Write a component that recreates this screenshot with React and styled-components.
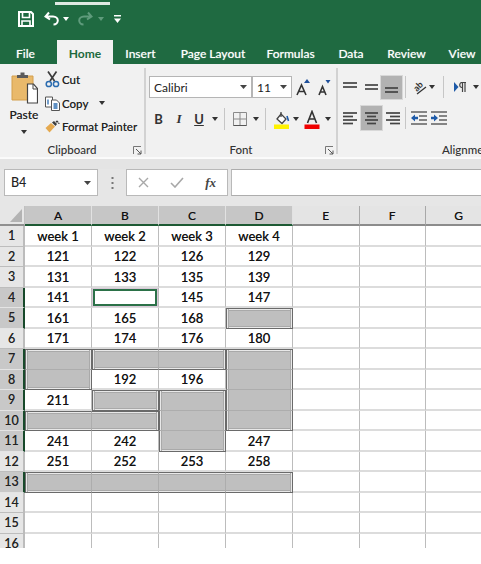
import React from "react";
import styled, { createGlobalStyle } from "styled-components";

const Global = createGlobalStyle`
  html, body { margin: 0; padding: 0; background: #fff; }
  #root { width: 481px; height: 564px; overflow: hidden; }
  * { box-sizing: border-box; }
`;

const FONT = `Lato, "Open Sans", "Liberation Sans", sans-serif`;
const GREEN = "#1f6a41";

const Page = styled.div`
  width: 481px; height: 548px; overflow: hidden; display: flex; flex-direction: column;
  font-family: ${FONT}; color: #222; background: #e6e6e6;
`;
const TitleBar = styled.div`
  height: 40px; background: ${GREEN}; position: relative; display: flex; align-items: center; padding: 0 0 2px 17px;
`;
const TitleHighlight = styled.div`
  position: absolute; left: 55px; top: 2px; width: 55px; height: 3px; background: #dfe9e2;
`;
const QatSlot = styled.div`
  width: ${p => p.$w}px; height: 24px; display: flex; align-items: center; justify-content: center; flex: none;
`;
const TabBar = styled.div`
  height: 24px; background: ${GREEN}; display: flex; align-items: stretch; overflow: hidden;
`;
const Tab = styled.div`
  width: ${p => p.$w}px; flex: none; display: flex; align-items: center; justify-content: center;
  font-size: 12px; font-weight: ${p => p.$active ? 700 : 500}; padding: 2px ${p => p.$pr || 0}px 0 0;
  color: ${p => p.$active ? "#1d6a3e" : "#fff"};
  background: ${p => p.$active ? "#f1f1f1" : "transparent"};
  text-shadow: ${p => p.$active ? "none" : "0 0 1px rgba(255,255,255,.5)"};
  white-space: nowrap;
`;
const Ribbon = styled.div`
  height: 94px; background: #f1f1f1; display: flex; border-bottom: 1px solid #fafafa; overflow: hidden;
`;
const Group = styled.div`
  width: ${p => p.$w}px; flex: none; position: relative; padding-top: ${p => p.$top || 0}px;
  margin: 4px 0 3px; border-right: ${p => p.$last ? "none" : "2px solid #d2d2d2"};
`;
const GroupLabel = styled.div`
  position: absolute; left: ${p => p.$left ?? 0}px; ${p => p.$left === undefined ? "right: 0;" : ""} bottom: -4px; height: 17px; line-height: 17px; text-align: center;
  font-size: 11.5px; font-weight: 500; color: #333; white-space: nowrap;
`;
const Launcher = styled.div`
  position: absolute; right: 2px; bottom: -1px; width: 9px; height: 9px; display: flex;
`;
const ClipLayout = styled.div`
  display: flex; padding-left: 10px;
`;
const PasteCol = styled.div`
  width: 28px; display: flex; flex-direction: column; align-items: center; font-size: 12px; font-weight: 500; line-height: 15px; padding-top: 4px;
`;
const PasteLabel = styled.div`
  margin-top: 3px; color: #222; text-shadow: 0 0 .5px rgba(0,0,0,.4);
`;
const PasteCaret = styled.div`
  margin-top: 8px;
`;
const ClipList = styled.div`
  margin-left: 7px; display: flex; flex-direction: column; padding-top: 0;
`;
const ClipItem = styled.div`
  height: 23.5px; display: flex; align-items: center; font-size: 11.5px; font-weight: 500; color: #222; white-space: nowrap;
  text-shadow: 0 0 .5px rgba(0,0,0,.4);
`;
const ClipIcon = styled.div`
  width: 17px; display: flex; flex: none;
`;
const CaretGap = styled.span`
  width: 11px;
`;
const ToolRow = styled.div`
  display: flex; align-items: center; height: ${p => p.$h || 24}px; margin-top: ${p => p.$mt || 0}px; padding-left: ${p => p.$pl || 0}px;
`;
const Combo = styled.div`
  width: ${p => p.$w}px; height: 22px; background: #fff; border: 1px solid #b5b5b5; flex: none;
  display: flex; align-items: center; justify-content: space-between; padding: 0 4px; font-size: 12px; color: #222;
`;
const Tool = styled.div`
  width: ${p => p.$w}px; height: ${p => p.$h || 22}px; flex: none; display: flex; align-items: center; justify-content: center;
  font-size: 13px; font-weight: 700; color: #333;
  background: ${p => p.$on ? "#b2b2b2" : "transparent"};
  outline: ${p => p.$on ? "1px solid #d8d8d8" : "none"};
  font-style: ${p => p.$italic ? "italic" : "normal"};
  font-family: ${p => p.$italic ? `"Liberation Serif", serif` : "inherit"};
  text-decoration: ${p => p.$under ? "underline" : "none"};
`;
const Sep = styled.div`
  width: 1px; height: 22px; background: #c6c6c6; flex: none; margin: 0 ${p => p.$m || 4}px;
`;
const Gap = styled.div`
  height: 11px; flex: none; background: #e4e4e4; border-top: 1px solid #fbfbfb;
`;
const FormulaBar = styled.div`
  height: 27px; background: #e6e6e6; display: flex; align-items: stretch; flex: none;
`;
const NameBox = styled.div`
  width: 94px; margin-left: 4px; background: #fff; border: 1px solid #b9b9b9; display: flex; align-items: center; justify-content: space-between;
  padding: 0 6px 0 6px; font-size: 12.5px; font-weight: 500; color: #222;
`;
const Dots = styled.div`
  width: 28px; display: flex; align-items: center; justify-content: center;
`;
const FxBox = styled.div`
  width: 102px; background: #fff; border: 1px solid #b9b9b9; display: flex; align-items: center; justify-content: space-between; padding: 0 11px 0 11px;
`;
const FxText = styled.span`
  font-family: "Liberation Serif", serif; font-style: italic; font-weight: 700; font-size: 13px; color: #444;
`;
const FormulaInput = styled.div`
  flex: 1; margin-left: 3px; background: #fff; border-top: 1px solid #adadad; border-bottom: 1px solid #adadad; border-left: 1px solid #b9b9b9;
`;
const SheetGap = styled.div`
  height: 10px; background: #e6e6e6; flex: none;
`;
const Sheet = styled.div`
  flex: 1; min-height: 0; overflow: hidden; background: #fff; display: grid;
  grid-template-columns: 25px 67px 67px 67px 67px 66.5px 66.5px 66.5px;
  grid-template-rows: 20px;
  grid-auto-rows: 20.5px;
  width: 500px;
`;
const Corner = styled.div`
  background: #e6e6e6; border-bottom: 2px solid #909090; border-right: 1px solid #c0c0c0; display: flex; align-items: flex-end; justify-content: flex-end; padding: 0 2px 2px 0;
`;
const ColHead = styled.div`
  display: flex; align-items: center; justify-content: center; font-size: 12px; font-weight: 500; color: #111;
  background: ${p => p.$sel ? "#c6c6c6" : "#e4e4e4"};
  border-right: 1px solid ${p => p.$sel ? "#e2e2e2" : "#a8a8a8"};
  border-bottom: 2px solid ${p => p.$sel ? "#1d5a34" : "#8c8c8c"};
  text-shadow: 0 0 .5px rgba(0,0,0,.4);
`;
const RowHead = styled.div`
  display: flex; align-items: center; justify-content: center; font-size: 12.5px; font-weight: 500; color: #222;
  background: ${p => p.$sel ? "#c8c8c8" : "#e6e6e6"};
  border-bottom: 1px solid ${p => p.$sel ? "#e4e4e4" : "#bdbdbd"};
  border-right: 2px solid ${p => p.$sel ? "#17492a" : "#bcbcbc"};
  text-shadow: 0 0 .5px rgba(0,0,0,.4);
`;
const Cell = styled.div`
  display: flex; align-items: center; justify-content: center; font-size: 13px; font-weight: 500; color: #111;
  border-right: 1px solid #bcbcbc; border-bottom: 2px solid #dcdcdc; background: #fff; position: relative; padding-top: 1px;
  text-shadow: 0 0 .5px rgba(0,0,0,.5);
`;
const edge = v => (v ? "1px solid #6a6a6a" : "1px solid #adadad");
const insetSide = (x, y, on) => {
  if (!on) return [];
  return [`inset ${x}px ${y}px 0 #e9e9e9`, `inset ${x * 2}px ${y * 2}px 0 #a9a9a9`];
};
const ShadeCell = styled.div`
  background: #bfbfbf;
  border-top: ${p => p.$t ? edge(true) : "0 solid transparent"};
  border-left: ${p => p.$l ? edge(true) : "0 solid transparent"};
  border-right: ${p => edge(p.$r)}; border-bottom: ${p => edge(p.$b)};
  box-shadow: ${p => {
    const s = [...insetSide(1, 0, p.$l), ...insetSide(-1, 0, p.$r), ...insetSide(0, 1, p.$t), ...insetSide(0, -1, p.$b)];
    return s.length ? s.join(", ") : "none";
  }};
`;
const Selected = styled.div`
  position: absolute; inset: 1px 1px 0 1px; border: 2px solid #2b7148; background: #fff; box-shadow: 0 0 0 1px #d8c9d8;
`;
const Svg = ({ w, h, vb, children }) => <svg width={w} height={h} viewBox={vb || `0 0 ${w} ${h}`} style={{ display: "block", flex: "none" }}>{children}</svg>;

const Caret = ({ c = "#333", w = 7 }) => <Svg w={w} h={4}><path d={`M0 0H${w}L${w / 2} 4Z`} fill={c} /></Svg>;
const SaveIcon = () => <Svg w={16} h={16}><path d="M1 1h12l2 2v12H1z" fill="none" stroke="#fff" strokeWidth="2" /><path d="M4.5 2v4.5h7V2M4 15v-5h8v5" fill="none" stroke="#fff" strokeWidth="1.6" /></Svg>;
const UndoIcon = ({ c = "#fff" }) => <Svg w={16} h={16}><path d="M5 1.5 1.5 5.5 6 8.5M2.5 5.5H9c3 0 4.8 2 4.8 4s-1.6 4-4.3 4" fill="none" stroke={c} strokeWidth="2" /></Svg>;
const RedoIcon = ({ c }) => <Svg w={16} h={16}><path d="M11 1.5 14.5 5.5 10 8.5M13.5 5.5H7c-3 0-4.8 2-4.8 4s1.6 4 4.3 4" fill="none" stroke={c} strokeWidth="2" /></Svg>;
const QatMore = () => <Svg w={7} h={8}><path d="M0 0h7v1.5H0z" fill="#fff" /><path d="M0 3.5h7L3.5 8z" fill="#fff" /></Svg>;
const PasteIcon = () => (
  <Svg w={27} h={32}>
    <path d="M1 4h21v24H1z" fill="#e9b96b" stroke="#d49f4c" />
    <path d="M6 6V3h3.5V0.5h4V3H17v3z" fill="#5b5b5b" />
    <path d="M16.5 12h6l4 4.5V31h-10z" fill="#fff" stroke="#444" strokeWidth="1.2" />
    <path d="M22 12v5h4.5" fill="none" stroke="#444" />
  </Svg>
);
const ScissorsIcon = () => (
  <Svg w={15} h={17}>
    <path d="M3 0.5 9.5 10M11.5 0.5 5 10" stroke="#3c3c3c" strokeWidth="1.7" fill="none" />
    <circle cx="3.8" cy="13" r="2.6" fill="none" stroke="#2b6cb0" strokeWidth="1.5" />
    <circle cx="11" cy="13" r="2.6" fill="none" stroke="#2b6cb0" strokeWidth="1.5" />
  </Svg>
);
const CopyIcon = () => (
  <Svg w={15} h={15}>
    <path d="M.5 1h7v10h-7z" fill="#fff" stroke="#555" />
    <path d="M6.5 4h5l3 3v7.5h-8z" fill="#fff" stroke="#555" />
    <path d="M3 3.5v5M8.5 8h4M8.5 10h4M8.5 12h4" stroke="#2b6cb0" strokeWidth="1.3" />
  </Svg>
);
const PainterIcon = () => (
  <Svg w={15} h={13}>
    <path d="M0.5 8 6 3l4 3.5L4.5 12.5z" fill="#e5a94f" />
    <path d="M7 2.5l2-1.5 3 3-1.5 2z" fill="#3c3c3c" />
    <path d="M11 1l1 1 1-1M13 3l1.5 .5" stroke="#3c3c3c" strokeWidth="1.3" />
  </Svg>
);
const LauncherIcon = () => <Svg w={9} h={9}><path d="M.5 8V.5H8" fill="none" stroke="#777" /><path d="M3 3 8 8M8 4.5V8H4.5" fill="none" stroke="#555" /></Svg>;
const BorderIcon = () => <Svg w={14} h={14}><path d="M.5.5h13v13H.5z M7 .5v13M.5 7h13" fill="none" stroke="#8a8a8a" /><path d="M.5 13.5h13" stroke="#555" /></Svg>;
const FillIcon = () => (
  <Svg w={17} h={19}>
    <path d="M4 9l4-5 5 5-4 4.5z" fill="#fff" stroke="#444" strokeWidth="1.3" />
    <path d="M8 2v5" stroke="#444" strokeWidth="1.3" />
    <path d="M14 6l1.5 5" stroke="#1e5aa8" strokeWidth="1.6" />
    <rect x="1" y="14.5" width="15" height="4.5" fill="#fff200" />
  </Svg>
);
const FontColorIcon = () => (
  <Svg w={16} h={19}>
    <path d="M3.5 13 8 1.5 12.5 13M5.3 9h5.4" fill="none" stroke="#333" strokeWidth="1.6" />
    <rect x="0.5" y="14.5" width="15" height="4.5" fill="#f00000" />
  </Svg>
);
const SizeA = ({ up }) => (
  <Svg w={14} h={17}>
    <path d={up ? "M1 16 5.5 6 10 16M2.8 12.5h5.4" : "M2 16 5.5 7.5 9 16M3.3 13h4.4"} fill="none" stroke="#333" strokeWidth="1.6" />
    <path d={up ? "M8 4h6L11 0z" : "M8.5 1h5L11 4.5z"} fill="#1e4f9a" />
  </Svg>
);
const Lines = ({ rows, w = 15, h = 13, c = "#444", sw = 1.7 }) => (
  <Svg w={w} h={h}>
    {rows.map(([y, a, b], i) => <path key={i} d={`M${a} ${y}H${b}`} stroke={c} strokeWidth={sw} />)}
  </Svg>
);
const OrientIcon = () => (
  <Svg w={20} h={20}>
    <g transform="rotate(-45 10 10)">
      <text x="5" y="12" fontFamily="Lato, sans-serif" fontSize="9" fontWeight="700" fill="#333">ab</text>
    </g>
    <path d="M8 17 17 10" stroke="#333" strokeWidth="1.3" />
  </Svg>
);
const RtlIcon = () => <Svg w={13} h={10}><path d="M0 0v10l4.5-5z" fill="#1e5aa8" /><path d="M7 .5h5M8 .5c-3 0-3 5 0 5M8.5 .5V10M11 .5V10" fill="none" stroke="#444" strokeWidth="1.2" /></Svg>;
const IndentIcon = ({ out }) => (
  <Svg w={16} h={14}>
    {[1, 5, 9, 13].map(y => <path key={y} d={y === 1 || y === 13 ? `M0 ${y}H16` : `M8 ${y}H16`} stroke="#555" strokeWidth="1.4" />)}
    <path d={out ? "M0 7 4 3.5V5.8H7V8.2H4V10.5Z" : "M7 7 3 3.5V5.8H0V8.2H3V10.5Z"} fill="#1e5aa8" />
  </Svg>
);
const ComboCaret = () => <Svg w={7} h={4}><path d="M0 0H7L3.5 4Z" fill="#444" /></Svg>;
const CrossIcon = () => <Svg w={11} h={11}><path d="M1 1 10 10M10 1 1 10" stroke="#a8a8a8" strokeWidth="1.4" /></Svg>;
const CheckIcon = () => <Svg w={14} h={11}><path d="M1 6 5 10 13 1" fill="none" stroke="#a8a8a8" strokeWidth="1.6" /></Svg>;
const DotsIcon = () => <Svg w={3} h={12}>{[1, 6, 11].map(y => <rect key={y} x="0.5" y={y - 1} width="2" height="2" fill="#777" />)}</Svg>;
const CornerTri = () => <Svg w={12} h={13}><path d="M12 0V13H0Z" fill="#b3b3b3" /></Svg>;

const TABS = [["File", 57, false, 6], ["Home", 56, true], ["Insert", 55], ["Page Layout", 90], ["Formulas", 65], ["Data", 56], ["Review", 55], ["View", 56]];

const ROWS = [
  ["week 1", "week 2", "week 3", "week 4"],
  [121, 122, 126, 129],
  [131, 133, 135, 139],
  [141, "", 145, 147],
  [161, 165, 168, "a"],
  [171, 174, 176, 180],
  ["b", "c", "c", "d"],
  ["b", 192, 196, "d"],
  [211, "e", "f", "d"],
  ["g", "g", "f", "d"],
  [241, 242, "f", 247],
  [251, 252, 253, 258],
  ["h", "h", "h", "h"],
  ["", "", "", ""], ["", "", "", ""], ["", "", "", ""]
];
const isGroup = v => typeof v === "string" && v.length === 1;
const SEL_ROWS = [4, 5, 7, 8, 9, 10, 11, 13];
const at = (r, c) => (ROWS[r] ? ROWS[r][c] : undefined);

export default function App() {
  return (
    <Page>
      <Global />
      <TitleBar>
        <TitleHighlight />
        <QatSlot $w={17}><SaveIcon /></QatSlot>
        <QatSlot $w={10} />
        <QatSlot $w={16}><UndoIcon /></QatSlot>
        <QatSlot $w={12}><Caret c="#fff" w={6} /></QatSlot>
        <QatSlot $w={5} />
        <QatSlot $w={16}><RedoIcon c="#5f9b7c" /></QatSlot>
        <QatSlot $w={16}><Caret c="#5f9b7c" w={6} /></QatSlot>
        <QatSlot $w={1} />
        <QatSlot $w={14}><QatMore /></QatSlot>
      </TitleBar>
      <TabBar>
        {TABS.map(([t, w, a, pr]) => <Tab key={t} $w={w} $active={a} $pr={pr}>{t}</Tab>)}
      </TabBar>
      <Ribbon>
        <Group $w={146}>
          <ClipLayout>
            <PasteCol>
              <PasteIcon />
              <PasteLabel>Paste</PasteLabel>
              <PasteCaret><Caret c="#333" w={6} /></PasteCaret>
            </PasteCol>
            <ClipList>
              <ClipItem><ClipIcon><ScissorsIcon /></ClipIcon>Cut</ClipItem>
              <ClipItem><ClipIcon><CopyIcon /></ClipIcon>Copy<CaretGap /><Caret w={6} /></ClipItem>
              <ClipItem><ClipIcon><PainterIcon /></ClipIcon>Format Painter</ClipItem>
            </ClipList>
          </ClipLayout>
          <GroupLabel>Clipboard</GroupLabel>
          <Launcher><LauncherIcon /></Launcher>
        </Group>
        <Group $w={192} $top={8}>
          <ToolRow $pl={3} $h={22}>
            <Combo $w={103}>Calibri<ComboCaret /></Combo>
            <Combo $w={40}>11<ComboCaret /></Combo>
            <Tool $w={21}><SizeA up /></Tool>
            <Tool $w={21}><SizeA /></Tool>
          </ToolRow>
          <ToolRow $pl={2} $mt={9}>
            <Tool $w={21}>B</Tool>
            <Tool $w={20} $italic>I</Tool>
            <Tool $w={20} $under>U</Tool>
            <Tool $w={12}><Caret w={6} /></Tool>
            <Sep $m={3} />
            <Tool $w={24}><BorderIcon /></Tool>
            <Tool $w={8}><Caret w={6} /></Tool>
            <Sep $m={5} />
            <Tool $w={20}><FillIcon /></Tool>
            <Tool $w={10}><Caret w={6} /></Tool>
            <Tool $w={22}><FontColorIcon /></Tool>
            <Tool $w={10}><Caret w={6} /></Tool>
          </ToolRow>
          <GroupLabel>Font</GroupLabel>
          <Launcher><LauncherIcon /></Launcher>
        </Group>
        <Group $w={160} $last $top={8}>
          <ToolRow $pl={2} $h={22}>
            <Tool $w={21}><Lines rows={[[2, 0, 14], [6, 0, 14]]} /></Tool>
            <Tool $w={20}><Lines rows={[[4, 1, 14], [8, 1, 14]]} /></Tool>
            <Tool $w={21} $on $h={23}><Lines rows={[[7, 1, 14], [11, 1, 14]]} /></Tool>
            <Sep $m={3} />
            <Tool $w={20}><OrientIcon /></Tool>
            <Tool $w={6}><Caret w={6} /></Tool>
            <Sep $m={8} />
            <Tool $w={16}><RtlIcon /></Tool>
            <Tool $w={16}><Caret w={6} /></Tool>
          </ToolRow>
          <ToolRow $pl={2} $mt={8} $h={24}>
            <Tool $w={21}><Lines rows={[[1, 0, 14], [4.5, 0, 10], [8, 0, 14], [11.5, 0, 10]]} /></Tool>
            <Tool $w={21} $on $h={24}><Lines rows={[[1, 1, 14], [4.5, 3, 12], [8, 1, 14], [11.5, 3, 12]]} /></Tool>
            <Tool $w={20}><Lines rows={[[1, 1, 15], [4.5, 5, 15], [8, 1, 15], [11.5, 5, 15]]} /></Tool>
            <Sep $m={3} />
            <Tool $w={20}><IndentIcon out /></Tool>
            <Tool $w={20}><IndentIcon /></Tool>
          </ToolRow>
          <GroupLabel $left={104}>Alignment</GroupLabel>
        </Group>
      </Ribbon>
      <Gap />
      <FormulaBar>
        <NameBox>B4<ComboCaret /></NameBox>
        <Dots><DotsIcon /></Dots>
        <FxBox><CrossIcon /><CheckIcon /><FxText>fx</FxText></FxBox>
        <FormulaInput />
      </FormulaBar>
      <SheetGap />
      <Sheet>
        <Corner><CornerTri /></Corner>
        {["A", "B", "C", "D", "E", "F", "G"].map((c, i) => <ColHead key={c} $sel={i < 4}>{c}</ColHead>)}
        {ROWS.map((row, r) => (
          <React.Fragment key={r}>
            <RowHead $sel={SEL_ROWS.includes(r + 1)}>{r + 1}</RowHead>
            {row.map((v, c) => {
              if (isGroup(v)) {
                return <ShadeCell key={c}
                  $t={at(r - 1, c) !== v} $b={at(r + 1, c) !== v} $l={at(r, c - 1) !== v} $r={at(r, c + 1) !== v} />;
              }
              return <Cell key={c}>{v}{r === 3 && c === 1 ? <Selected /> : null}</Cell>;
            })}
            <Cell /><Cell /><Cell />
          </React.Fragment>
        ))}
      </Sheet>
    </Page>
  );
}
